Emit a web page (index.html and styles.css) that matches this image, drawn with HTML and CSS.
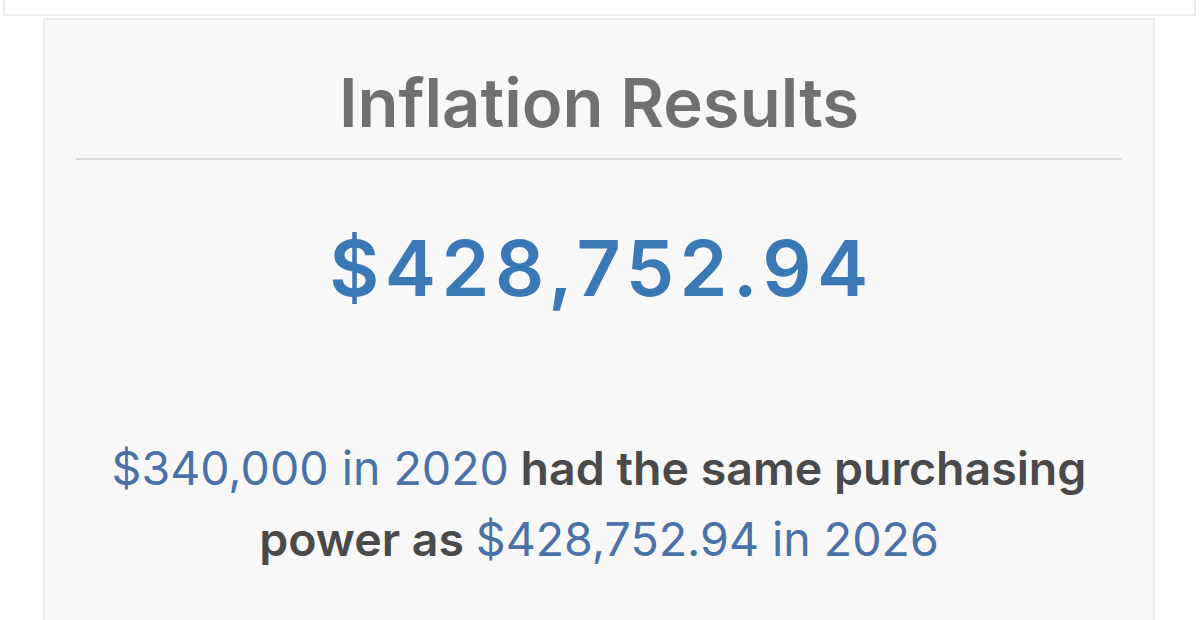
FILE: index.html
```html
<!DOCTYPE html>
<html lang="en">
<head>
    <meta charset="UTF-8">
    <meta name="viewport" content="width=device-width, initial-scale=1.0">
    <title>Inflation Results</title>
    <link rel="stylesheet" href="styles.css">
</head>
<body>
    <div class="topbar"></div>
    <div class="card">
        <h2 class="title">Inflation Results</h2>
        <div class="amount">$428,752.94</div>
        <p class="summary">
            <span class="hl">$340,000 in 2020</span> had the same purchasing
            power as <span class="hl">$428,752.94 in 2026</span>
        </p>
    </div>
</body>
</html>
```

FILE: styles.css
```css
body {
    margin: 0;
    background: #ffffff;
    font-family: Inter, "Noto Sans", sans-serif;
}
.topbar {
    height: 14px;
    margin: 0 4px 0 3px;
    background: #ffffff;
    border: 2px solid #ececec;
    border-top: none;
}
.card {
    margin: 2px 45px 0 43px;
    padding: 43px 31px 80px;
    background: #f8f8f8;
    border: 2px solid #ececec;
    border-bottom: none;
    text-align: center;
}
.title {
    margin: 0;
    padding-bottom: 15px;
    border-bottom: 2px solid #dcdcdc;
    font-size: 67px;
    font-weight: 600;
    line-height: 1.2;
    color: #707070;
}
.amount {
    margin-top: 62px;
    padding-left: 5px;
    font-size: 77px;
    font-weight: 600;
    line-height: 1.2;
    letter-spacing: 5.5px;
    color: #3a78b6;
}
.summary {
    margin: 118px 0 0;
    font-size: 46.5px;
    font-weight: 600;
    line-height: 71px;
    color: #4a4a4a;
}
.hl {
    font-weight: 400;
    color: #4a72a8;
}
```
